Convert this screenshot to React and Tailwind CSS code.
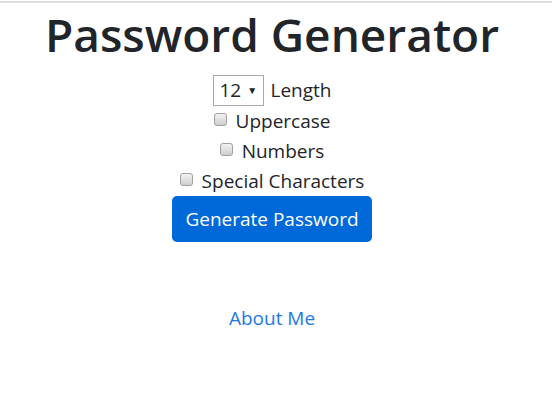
import React from "react";

function Box() {
  return (
    <span className="inline-block w-[13px] h-[13px] rounded-[3px] border border-[#a0a0a0] bg-gradient-to-b from-[#f2f2f2] to-[#cfcfcf] mr-[9px] -mt-[4px]" />
  );
}

export default function App() {
  return (
    <div className="min-h-screen bg-white text-[#212529] pr-[8px]" style={{ fontFamily: '"Open Sans", "Noto Sans", sans-serif' }}>
      <div className="pt-[1px] -mr-[8px]">
        <div className="h-[2px] bg-[#dcdcdc]" />
      </div>
      <h1 className="text-center text-[46px] leading-[64px] font-semibold -mt-[1px]">Password Generator</h1>
      <div className="flex flex-col items-center text-[19px]">
        <div className="flex items-center h-[32px] mt-[8px]">
          <div className="w-[51px] h-[31px] border border-[#a9a9a9] flex items-center pl-[6px] bg-white">
            <span className="leading-none">12</span>
            <span className="text-[10px] ml-[6px] leading-none">▼</span>
          </div>
          <span className="ml-[7px]">Length</span>
        </div>
        <label className="flex items-center h-[30px]"><Box />Uppercase</label>
        <label className="flex items-center h-[30px]"><Box />Numbers</label>
        <label className="flex items-center h-[30px]"><Box />Special Characters</label>
        <button className="w-[200px] h-[46px] shrink-0 rounded-[5px] bg-[#0069d9] text-white text-[19px]">Generate Password</button>
        <a href="#" className="mt-[62px] text-[#1b7ae6] text-[19px]">About Me</a>
      </div>
    </div>
  );
}
